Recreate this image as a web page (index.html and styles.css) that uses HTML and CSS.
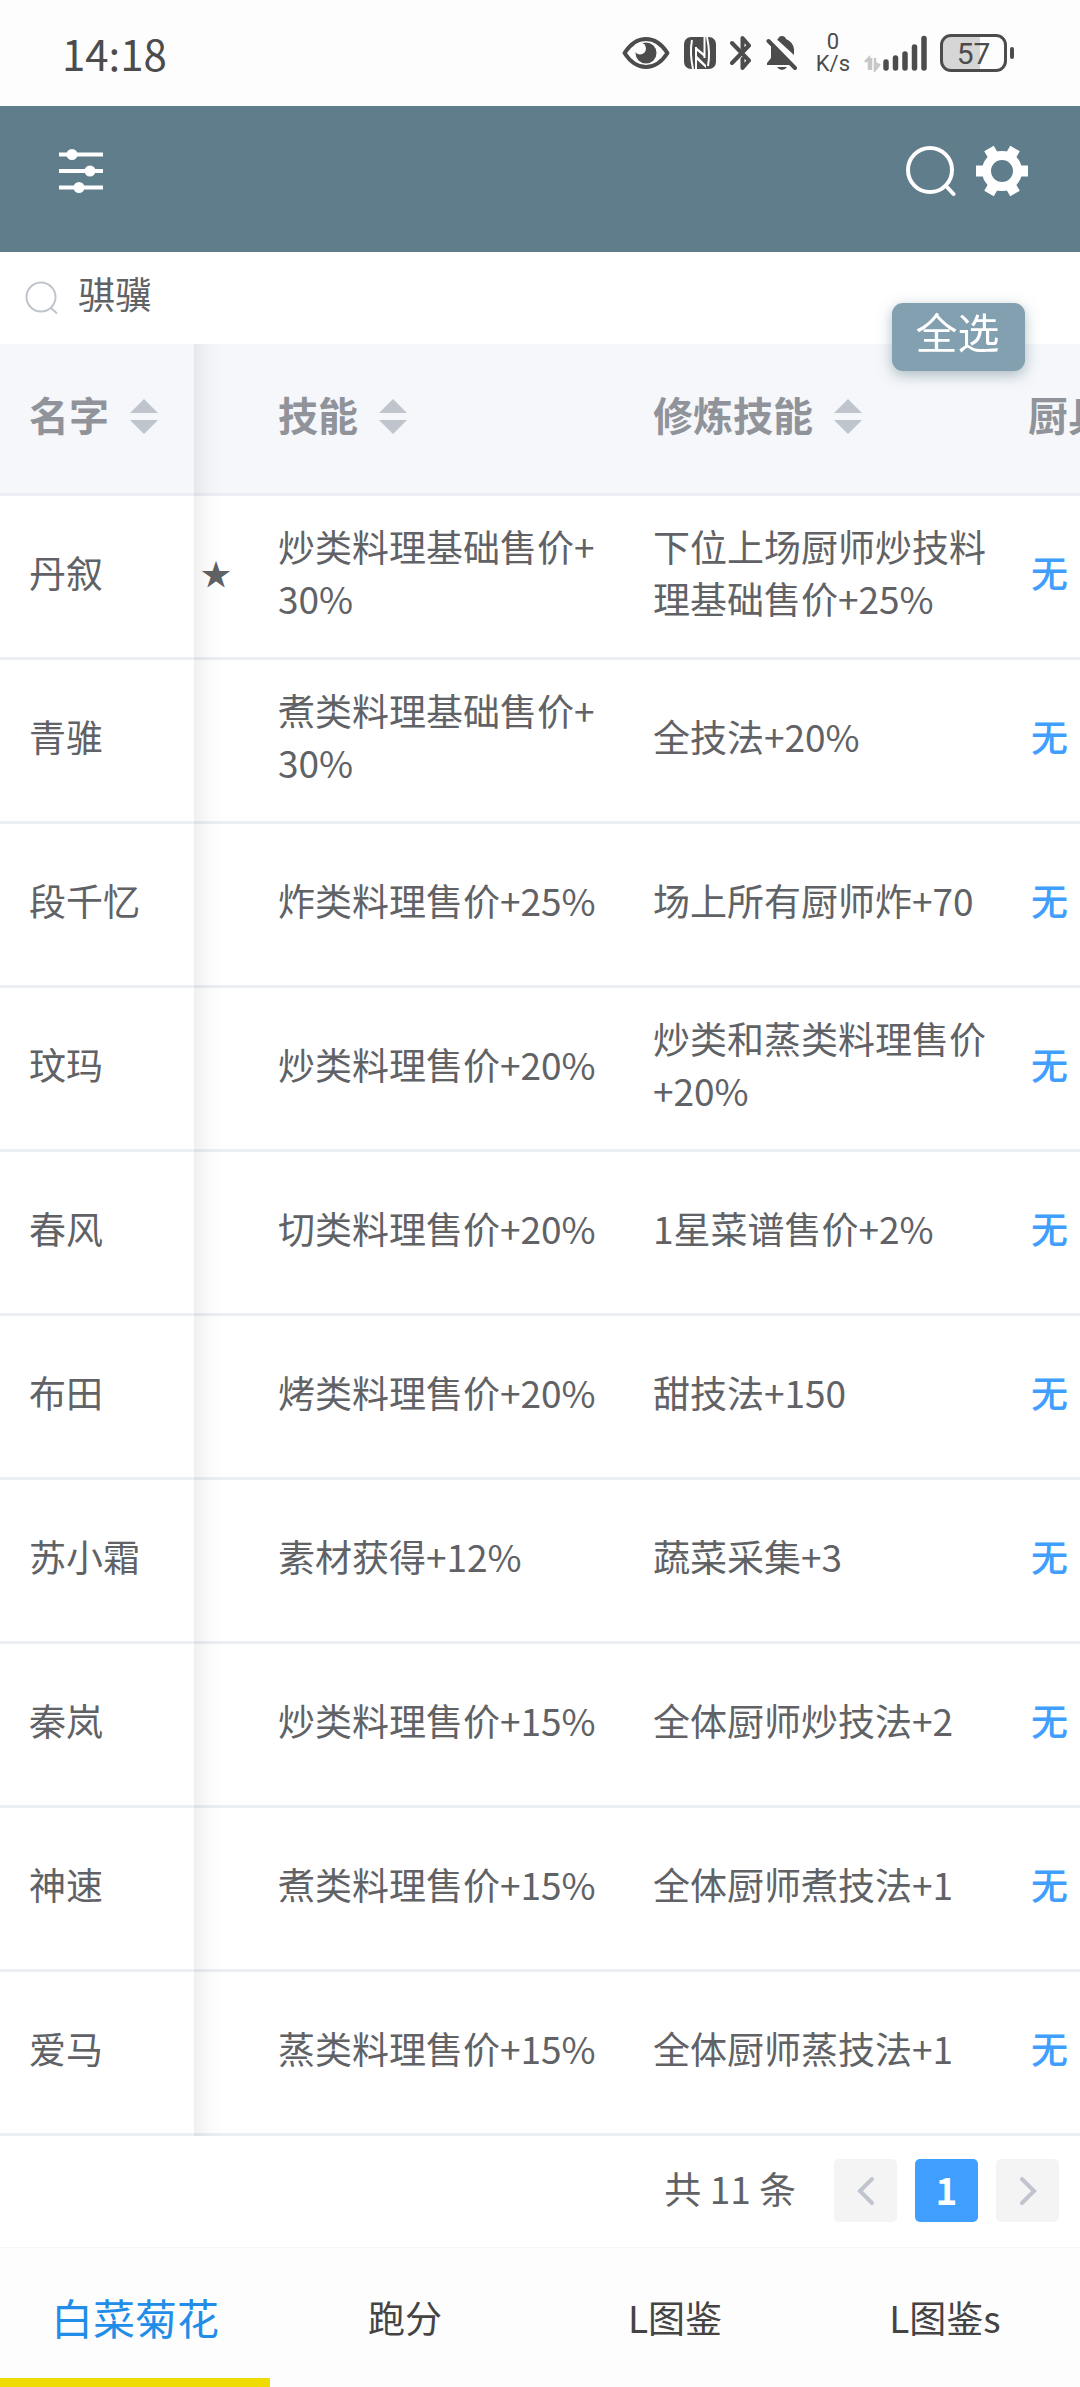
FILE: index.html
```html
<!DOCTYPE html>
<html lang="zh-CN">
<head>
<meta charset="utf-8">
<meta name="viewport" content="width=device-width">
<title>厨师图鉴</title>
<link rel="stylesheet" href="styles.css">
</head>
<body>
<div class="status">
  <time class="clock">14:18</time>
  <div class="indicators">
    <svg class="eye" width="48" height="36" viewBox="0 0 48 36" aria-hidden="true">
      <path d="M2.500 18C9 8 16 4 24 4s15 4 21.500 14C39 28 32 32 24 32S9 28 2.500 18Z" fill="none" stroke="#4c4c4c" stroke-width="4" stroke-linejoin="round"/>
      <circle cx="24" cy="18" r="10.500" fill="#4c4c4c"/>
      <circle cx="18" cy="13.500" r="6" fill="#fdfdfd"/>
    </svg>
    <svg class="nfc" width="32" height="34" viewBox="0 0 32 34" aria-hidden="true">
      <rect y="1" width="32" height="32" rx="7" fill="#4c4c4c"/>
      <path d="M8 4Q5.500 17 9 33M12 11V33M20.500 1V22M23 1Q26.500 17 24 30" fill="none" stroke="#fdfdfd" stroke-width="2"/>
      <path d="M12 11L20.500 18V21L12 14ZM12 19L22 29V32L12 23Z" fill="#fdfdfd"/>
    </svg>
    <svg class="bt" width="22" height="36" viewBox="0 0 22 36" aria-hidden="true">
      <path d="M2 8L19 25.500L12.500 33V24M2 28L19 10.500L12.500 3V13" fill="none" stroke="#4c4c4c" stroke-width="4" stroke-linecap="round" stroke-linejoin="round"/>
    </svg>
    <svg class="bell" width="32" height="36" viewBox="0 0 32 36" aria-hidden="true">
      <path d="M12 4Q13 1 16 1t4 3Q27 7 28 14L28 20 11 4.500ZM5 11L24 30H1V28L5 23Z" fill="#4c4c4c"/>
      <path d="M2.500 6L29 33" stroke="#4c4c4c" stroke-width="4" stroke-linecap="round"/>
      <path d="M11 32H21Q19 35 16 35T11 32Z" fill="#4c4c4c"/>
    </svg>
    <div class="speed"><span>0</span><span>K/s</span></div>
    <svg class="signal" width="64" height="38" viewBox="0 0 64 38" aria-hidden="true">
      <path d="M1 28l4-4v12M7 24v12M11 24v12l4-5-4-2" fill="none" stroke="#c6c6c6" stroke-width="2.500"/>
      <path d="M22 28v6M31.500 24v10M41 20v14M50.500 13v21M60 4.500v29.500" stroke="#4c4c4c" stroke-width="5.500" stroke-linecap="round"/>
    </svg>
    <div class="battery">57</div>
  </div>
</div>

<header class="topbar">
  <button class="icon-btn" type="button" aria-label="筛选">
    <svg width="44" height="46" viewBox="0 0 44 46"><path d="M0 6.500H44M0 23H44M0 39.500H44" stroke="#fff" stroke-width="4"/><g fill="#fff"><circle cx="13" cy="6.500" r="5.500"/><circle cx="31" cy="23" r="5.500"/><circle cx="20" cy="39.500" r="5.500"/></g></svg>
  </button>
  <div class="top-actions">
    <button class="icon-btn" type="button" aria-label="搜索">
      <svg width="50" height="52" viewBox="0 0 50 52" fill="none" stroke="#fff" stroke-width="4" stroke-linecap="round"><circle cx="24" cy="25" r="22"/><path d="M40 41L47.500 49"/></svg>
    </button>
    <button class="icon-btn" type="button" aria-label="设置">
      <svg width="52" height="52" viewBox="-26 -26 52 52"><circle r="15.500" fill="none" stroke="#fff" stroke-width="9"/><g fill="#fff"><path id="tooth" d="M17-5.500H26V5.500H17Z"/><use href="#tooth" transform="rotate(60)"/><use href="#tooth" transform="rotate(120)"/><use href="#tooth" transform="rotate(180)"/><use href="#tooth" transform="rotate(240)"/><use href="#tooth" transform="rotate(300)"/></g></svg>
    </button>
  </div>
</header>

<main class="content">
  <label class="search">
    <svg width="34" height="34" viewBox="0 0 34 34" fill="none" stroke="#c0c4cc" stroke-width="2" stroke-linecap="round" aria-hidden="true"><circle cx="16" cy="16" r="14.500"/><path d="M26 27L31.500 32"/></svg>
    <input type="text" value="骐骥" aria-label="搜索厨师">
  </label>
  <button class="select-all" type="button">全选</button>

  <div class="table-scroll">
    <table class="chefs">
      <colgroup><col class="c-name"><col class="c-star"><col class="c-skill"><col class="c-skill"><col class="c-tool"></colgroup>
      <thead>
        <tr>
          <th scope="col"><button class="sort" type="button">名字<svg width="28" height="36" viewBox="0 0 28 36"><path d="M0 15L14 1L28 15ZM0 22H28L14 36Z"/></svg></button></th>
          <td></td>
          <th scope="col"><button class="sort" type="button">技能<svg width="28" height="36" viewBox="0 0 28 36"><path d="M0 15L14 1L28 15ZM0 22H28L14 36Z"/></svg></button></th>
          <th scope="col"><button class="sort" type="button">修炼技能<svg width="28" height="36" viewBox="0 0 28 36"><path d="M0 15L14 1L28 15ZM0 22H28L14 36Z"/></svg></button></th>
          <th scope="col">厨具</th>
        </tr>
      </thead>
      <tbody>
        <tr><td>丹叙</td><td>★</td><td>炒类料理基础售价+30%</td><td>下位上场厨师炒技料理基础售价+25%</td><td><a href="#">无</a></td></tr>
        <tr><td>青骓</td><td></td><td>煮类料理基础售价+30%</td><td>全技法+20%</td><td><a href="#">无</a></td></tr>
        <tr><td>段千忆</td><td></td><td>炸类料理售价+25%</td><td>场上所有厨师炸+70</td><td><a href="#">无</a></td></tr>
        <tr><td>玟玛</td><td></td><td>炒类料理售价+20%</td><td>炒类和蒸类料理售价+20%</td><td><a href="#">无</a></td></tr>
        <tr><td>春风</td><td></td><td>切类料理售价+20%</td><td>1星菜谱售价+2%</td><td><a href="#">无</a></td></tr>
        <tr><td>布田</td><td></td><td>烤类料理售价+20%</td><td>甜技法+150</td><td><a href="#">无</a></td></tr>
        <tr><td>苏小霜</td><td></td><td>素材获得+12%</td><td>蔬菜采集+3</td><td><a href="#">无</a></td></tr>
        <tr><td>秦岚</td><td></td><td>炒类料理售价+15%</td><td>全体厨师炒技法+2</td><td><a href="#">无</a></td></tr>
        <tr><td>神速</td><td></td><td>煮类料理售价+15%</td><td>全体厨师煮技法+1</td><td><a href="#">无</a></td></tr>
        <tr><td>爱马</td><td></td><td>蒸类料理售价+15%</td><td>全体厨师蒸技法+1</td><td><a href="#">无</a></td></tr>
      </tbody>
    </table>
  </div>

  <div class="pager">
    <span class="total">共 11 条</span>
    <button type="button" aria-label="上一页" disabled><svg width="18" height="30" viewBox="0 0 18 30"><path d="M15 3L3 15L15 27"/></svg></button>
    <button type="button" class="current">1</button>
    <button type="button" aria-label="下一页" disabled><svg width="18" height="30" viewBox="0 0 18 30"><path d="M3 3L15 15L3 27"/></svg></button>
  </div>
</main>

<nav class="tabs">
  <a class="active" href="#">白菜菊花</a>
  <a href="#">跑分</a>
  <a href="#">L图鉴</a>
  <a href="#">L图鉴s</a>
</nav>
</body>
</html>
```
FILE: styles.css
```css
* { box-sizing: border-box; }

body {
  margin: 0;
  min-height: 100vh;
  display: flex;
  flex-direction: column;
  background: #fff;
  color: #606266;
  font-family: "Noto Sans CJK SC", sans-serif;
  font-size: 37px;
  line-height: 52px;
}

button, input {
  margin: 0;
  padding: 0;
  border: 0;
  background: none;
  color: inherit;
  font: inherit;
}

a { color: inherit; text-decoration: none; }
svg { display: block; flex: none; }

/* Device status bar */
.status {
  display: flex;
  align-items: center;
  justify-content: space-between;
  height: 106px;
  padding: 0 73px 0 62px;
  background: #fdfdfd;
  color: #4c4c4c;
}

.clock { font-size: 42px; }

.indicators { display: flex; align-items: center; gap: 14px; }

.speed {
  display: flex;
  flex-direction: column;
  align-items: center;
  margin-left: 4px;
  font-family: Roboto, sans-serif;
  font-size: 22px;
  line-height: 22px;
}

.battery {
  position: relative;
  width: 67px;
  height: 38px;
  margin-left: -2px;
  border: 3px solid #4c4c4c;
  border-radius: 11px;
  background: linear-gradient(90deg, #d6d6d6 60%, #fdfdfd 60%);
  font: 400 30px/34px Roboto, sans-serif;
  text-align: center;
}

.battery::after {
  content: "";
  position: absolute;
  top: 10px;
  right: -10px;
  width: 4px;
  height: 12px;
  border-radius: 2px;
  background: #4c4c4c;
}

/* App bar */
.topbar {
  display: flex;
  align-items: center;
  justify-content: space-between;
  height: 146px;
  padding: 0 52px 16px 59px;
  background: #607d8b;
}

.top-actions { display: flex; align-items: center; gap: 20px; }

.content { position: relative; }

.search {
  display: flex;
  align-items: center;
  gap: 19px;
  height: 92px;
  padding: 0 25px;
}

.search input {
  flex: 1;
  min-width: 0;
  height: 52px;
  margin-bottom: 10px;
}

.select-all {
  position: absolute;
  z-index: 3;
  top: 51px;
  right: 55px;
  width: 133px;
  height: 68px;
  padding: 0 2px 12px 0;
  border-radius: 11px;
  background: #82a0af;
  box-shadow: 0 4px 14px rgba(96, 125, 139, 0.5);
  color: #fff;
  font-size: 42px;
}

/* Chef table */
.table-scroll { overflow-x: auto; scrollbar-width: none; }

.chefs {
  width: 1200px;
  min-width: 100%;
  table-layout: fixed;
  border-collapse: separate;
  border-spacing: 0;
}

.c-name { width: 194px; }
.c-star { width: 64px; }
.c-skill { width: 375px; }
.c-tool { width: 192px; }

.chefs th, .chefs td {
  height: 164px;
  padding: 0 19px 9px 20px;
  border-bottom: 3px solid #ebeef5;
  text-align: left;
  vertical-align: middle;
  word-break: break-all;
}

.chefs thead th, .chefs thead td {
  height: 152px;
  background: #f5f7fa;
  color: #909399;
  font-size: 40px;
  font-weight: 700;
}

.chefs tr > :first-child {
  position: sticky;
  z-index: 1;
  left: 0;
  padding-left: 29px;
  padding-right: 0;
  background: #fff;
}

.chefs thead tr > :first-child { background: #f5f7fa; }

.chefs tr > :first-child::after {
  content: "";
  position: absolute;
  top: 0;
  bottom: -3px;
  left: 100%;
  width: 28px;
  background: linear-gradient(90deg, rgba(0, 0, 0, 0.06), rgba(0, 0, 0, 0.02) 50%, rgba(0, 0, 0, 0));
}

.chefs tbody tr > :nth-child(2) { padding-left: 7px; padding-right: 0; font-size: 30px; }
.chefs td:last-child { padding-left: 23px; color: #409eff; font-weight: 500; }

.sort { display: flex; align-items: center; gap: 21px; }
.sort svg { margin-top: 4px; fill: #c0c4cc; }

/* Pagination */
.pager {
  display: flex;
  align-items: center;
  justify-content: flex-end;
  gap: 18px;
  height: 111px;
  padding: 0 21px 2px;
}

.total { margin-right: 20px; padding-bottom: 6px; }

.pager button {
  display: flex;
  align-items: center;
  justify-content: center;
  width: 63px;
  height: 63px;
  border-radius: 5px;
  background: #f4f4f5;
}

.pager svg {
  fill: none;
  stroke: #c0c4cc;
  stroke-width: 4;
  stroke-linecap: round;
}

.pager .current { padding-bottom: 4px; background: #409eff; color: #fff; font-weight: 700; }

/* Bottom tabs */
.tabs {
  display: grid;
  grid-template-columns: repeat(4, 1fr);
  height: 140px;
  border-top: 1px solid #f5f5f5;
  background: #fdfdfd;
  color: #444;
}

.tabs a {
  display: flex;
  align-items: center;
  justify-content: center;
  padding-top: 8px;
  border-bottom: 9px solid transparent;
}

.tabs .active { border-bottom-color: #f0dc05; color: #218de8; font-size: 42px; }
```
